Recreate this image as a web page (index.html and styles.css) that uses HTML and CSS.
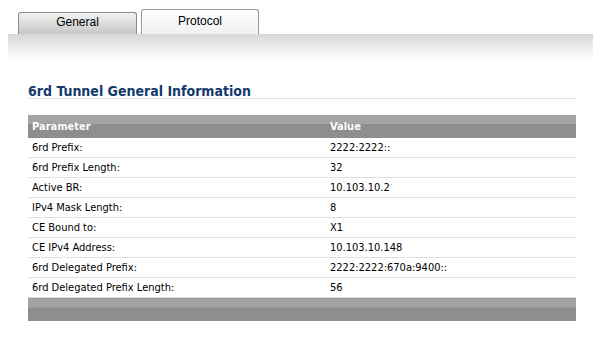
FILE: index.html
```html
<!DOCTYPE html>
<html lang="en">
<head>
  <meta charset="UTF-8">
  <title>6rd Tunnel</title>
  <link rel="stylesheet" href="styles.css">
</head>
<body>

  <div class="tabs">
    <div class="tab">General</div>
    <div class="tab active">Protocol</div>
  </div>
  <div class="band"></div>

  <div class="content">
    <h2>6rd Tunnel General Information</h2>

    <table class="info">
      <thead>
        <tr>
          <th class="param">Parameter</th>
          <th>Value</th>
        </tr>
      </thead>
      <tbody>
        <tr><td>6rd Prefix:</td><td>2222:2222::</td></tr>
        <tr><td>6rd Prefix Length:</td><td>32</td></tr>
        <tr><td>Active BR:</td><td>10.103.10.2</td></tr>
        <tr><td>IPv4 Mask Length:</td><td>8</td></tr>
        <tr><td>CE Bound to:</td><td>X1</td></tr>
        <tr><td>CE IPv4 Address:</td><td>10.103.10.148</td></tr>
        <tr><td>6rd Delegated Prefix:</td><td>2222:2222:670a:9400::</td></tr>
        <tr><td>6rd Delegated Prefix Length:</td><td>56</td></tr>
      </tbody>
      <tfoot>
        <tr><td colspan="2"></td></tr>
      </tfoot>
    </table>
  </div>

</body>
</html>
```

FILE: styles.css
```css
body {
  margin: 0;
  background-color: #fff;
  font-family: Tahoma, "DejaVu Sans", sans-serif;
  font-stretch: condensed;
  color: #000;
}

.tabs {
  display: flex;
  align-items: flex-end;
  gap: 4px;
  padding: 9px 0 0 18px;
}

.tab {
  box-sizing: border-box;
  width: 119px;
  height: 22px;
  border: 1px solid #8a8a8a;
  border-bottom: none;
  border-radius: 3px 3px 0 0;
  background: linear-gradient(#f2f2f2, #c6c6c6);
  font-family: "Liberation Sans", Arial, sans-serif;
  font-stretch: normal;
  font-size: 12px;
  line-height: 18px;
  text-align: center;
}

.tab.active {
  width: 118px;
  height: 25px;
  line-height: 23px;
  border-color: #9a9a9a;
  background: linear-gradient(#ffffff, #f0f0f0);
}

.band {
  margin-left: 8px;
  height: 25px;
  border-top: 1px solid #d3d6e6;
  background: linear-gradient(#d9d9d9, #ffffff);
}

.content {
  width: 548px;
  padding-left: 28px;
}

h2 {
  margin: 24px 0 0 0;
  padding: 0;
  font-size: 14px;
  line-height: 14px;
  font-weight: bold;
  color: #133a6b;
  border-bottom: 1px solid #e2e2e2;
}

.info {
  width: 100%;
  margin-top: 16px;
  border-collapse: collapse;
  font-size: 11px;
}

.info th {
  height: 23px;
  padding: 0 0 0 2px;
  text-align: left;
  color: #fff;
  font-weight: bold;
  background: linear-gradient(#a4a4a4 0, #a4a4a4 40%, #8e8e8e 40%, #8e8e8e 100%);
}

.info th.param {
  width: 296px;
  padding-left: 4px;
}

.info td {
  height: 19px;
  padding: 0 0 0 4px;
  border-bottom: 1px solid #e0e0e0;
}

.info td + td {
  padding-left: 2px;
}

.info tfoot td {
  height: 23px;
  padding: 0;
  border-top: 1px solid #d0d0d0;
  border-bottom: none;
  background: linear-gradient(#a4a4a4 0, #a4a4a4 40%, #8e8e8e 40%, #8e8e8e 100%);
}
```
